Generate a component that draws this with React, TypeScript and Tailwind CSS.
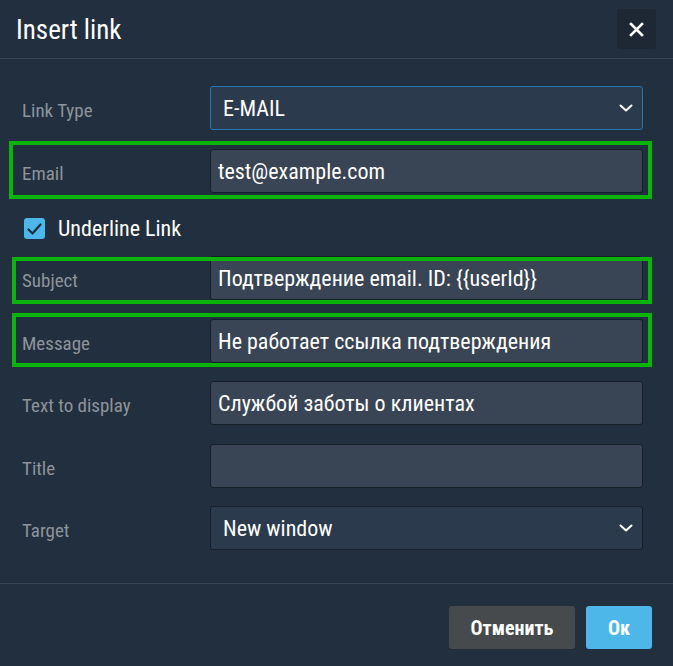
import type { ReactNode } from "react";

const font = "font-['Roboto_Condensed','Roboto','Liberation_Sans',sans-serif]";

function Chevron() {
  return (
    <svg width="14" height="8" viewBox="0 0 14 8" fill="none" stroke="currentColor" strokeWidth="2" strokeLinecap="round" strokeLinejoin="round" className="text-white">
      <path d="M1.5 1.5 7 6.5l5.5-5" />
    </svg>
  );
}

function Highlight({ className }: { className: string }) {
  return <span className={`pointer-events-none absolute z-10 border-4 border-[#0ab40a] ${className}`} />;
}

function Row({ label, children, mark, className = "" }: { label: string; children: ReactNode; mark?: string; className?: string }) {
  return (
    <div className={`relative flex items-center ${className}`}>
      <div className="w-[188px] pt-[6px] text-[19px] text-[#8d949c]">{label}</div>
      {children}
      {mark && <Highlight className={mark} />}
    </div>
  );
}

function Input({ value }: { value: string }) {
  return (
    <div className="flex h-[44px] w-[433px] items-center rounded-[3px] border border-[#161e27] bg-[#394554] pl-[7px] text-[22px] text-white">
      {value}
    </div>
  );
}

function Select({ value, focused }: { value: string; focused?: boolean }) {
  return (
    <div
      className={`flex h-[44px] w-[433px] items-center justify-between rounded-[3px] border bg-[#2b3a4d] pl-[12px] pr-[9px] text-[22px] text-white ${
        focused ? "border-[#207ab7]" : "border-[#161e27]"
      }`}
    >
      <span>{value}</span>
      <Chevron />
    </div>
  );
}

export default function App() {
  return (
    <div className={`flex h-[666px] w-[673px] flex-col bg-[#222f3e] ${font}`}>
      <div className="flex h-[59px] shrink-0 items-center justify-between border-b border-[#394656] pl-[16px] pr-[17px]">
        <h1 className="pt-[3px] text-[27px] leading-none text-white">Insert link</h1>
        <button type="button" className="flex h-[40px] w-[39px] items-center justify-center rounded-[3px] bg-[#1d2834] text-white" aria-label="Close">
          <svg width="15" height="15" viewBox="0 0 15 15" fill="none" stroke="currentColor" strokeWidth="2.6" strokeLinecap="square">
            <path d="M2 2l11 11M13 2 2 13" />
          </svg>
        </button>
      </div>

      <div className="flex flex-1 flex-col border-b border-[#394656] pl-[22px] pt-[27px]">
        <Row label="Link Type">
          <Select value="E-MAIL" focused />
        </Row>
        <Row label="Email" className="mt-[19px]" mark="-top-[8px] -bottom-[6px] -left-[13px] right-[21px]">
          <Input value="test@example.com" />
        </Row>
        <label className="mt-[25px] flex h-[21px] items-center pl-[2px]">
          <span className="flex h-[21px] w-[21px] items-center justify-center rounded-[3px] bg-[#4db6eb]">
            <svg width="15" height="12" viewBox="0 0 15 12" fill="none" stroke="#1f2d3d" strokeWidth="2.2" strokeLinecap="round" strokeLinejoin="round">
              <path d="M1.5 6.5 5.5 10.5 13.5 1.5" />
            </svg>
          </span>
          <span className="ml-[13px] text-[22px] text-white">Underline Link</span>
        </label>
        <Row label="Subject" className="mt-[17px]" mark="top-[1px] -bottom-[4px] -left-[10px] right-[21px]">
          <Input value="Подтверждение email. ID: {{userId}}" />
        </Row>
        <Row label="Message" className="mt-[19px]" mark="-top-[6px] -bottom-[4px] -left-[10px] right-[21px]">
          <Input value="Не работает ссылка подтверждения" />
        </Row>
        <Row label="Text to display" className="mt-[18px]">
          <Input value="Службой заботы о клиентах" />
        </Row>
        <Row label="Title" className="mt-[19px]">
          <Input value="" />
        </Row>
        <Row label="Target" className="mt-[18px]">
          <Select value="New window" />
        </Row>
      </div>

      <div className="flex h-[82px] shrink-0 items-start justify-end gap-[11px] pr-[21px] pt-[22px]">
        <button type="button" className="h-[43px] w-[126px] rounded-[3px] bg-[#464a4d] text-[20px] font-bold text-white">
          Отменить
        </button>
        <button type="button" className="h-[43px] w-[66px] rounded-[3px] bg-[#4cb7e8] text-[20px] font-bold text-white">
          Ок
        </button>
      </div>
    </div>
  );
}
